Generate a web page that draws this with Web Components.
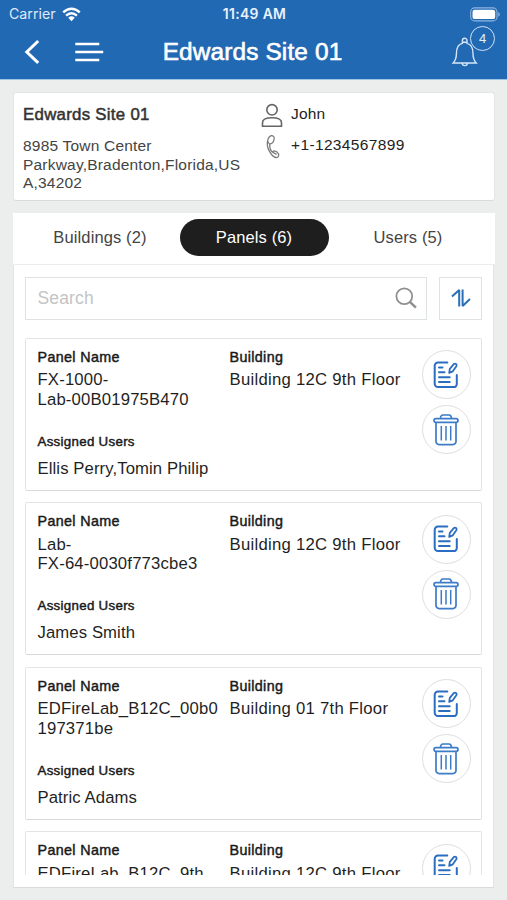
<!DOCTYPE html>
<html lang="en">
<head>
<meta charset="utf-8">
<title>Edwards Site 01</title>
<style>
html,body{margin:0;height:900px;overflow:hidden;background:#ebeeed}
body{font-family:"Liberation Sans",Arial,sans-serif;letter-spacing:.15px;color:#1f1f1f}
</style>
</head>
<body>
<site-app></site-app>
<script>
const define = (name, html, setup) => customElements.define(name, class extends HTMLElement {
  connectedCallback() {
    if (this.shadowRoot) return;
    const t = document.createElement('template');
    t.innerHTML = html;
    this.attachShadow({mode: 'open'}).appendChild(t.content.cloneNode(true));
    if (setup) setup(this, this.shadowRoot);
  }
});

define('status-bar', `
<style>
:host{display:grid;grid-template-columns:1fr auto 1fr;align-items:center;height:28px;padding:0 7px 0 9px;box-sizing:border-box;font:14.2px/28px Inter,sans-serif;letter-spacing:0;color:#dfeafa}
.left{display:flex;align-items:center;gap:6px}
.time{font-weight:600;letter-spacing:.35px;font-size:13.9px;color:#e9f2fc}
.right{display:flex;justify-content:flex-end}
svg{display:block}
</style>
<div class="left"><span>Carrier</span>
<svg width="19" height="15" viewBox="0 0 19 15" fill="none" stroke="#fff" stroke-width="2.5"><path d="M1.2 5.4Q9.5-2 17.8 5.4M4.1 8.6Q9.5 3.9 14.9 8.6"/><path d="M6.3 10.7Q9.5 8 12.7 10.7L9.5 14.3Z" fill="#fff" stroke="none"/></svg></div>
<span class="time">11:49 AM</span>
<div class="right"><svg width="30" height="15" viewBox="0 0 30 15"><rect x=".7" y=".9" width="26.3" height="13" rx="4" fill="none" stroke="#8fb5df" stroke-width="1.1"/><rect x="2.5" y="2.7" width="22.7" height="9.4" rx="2.2" fill="#fff"/><path d="M28.3 5v4.8q1.5-.9 1.5-2.4T28.3 5z" fill="#8fb5df"/></svg></div>`);

define('nav-bar', `
<style>
:host{display:grid;grid-template-columns:123px 1fr 125px;height:51px;color:#fff}
.left{display:flex;gap:36px;padding:11px 0 0 24px}
h1{margin:0;text-align:center;font-size:24.4px;line-height:47px;font-weight:400;letter-spacing:.14px;-webkit-text-stroke:.6px #fff;white-space:nowrap}
.bell{position:relative;justify-self:end;width:55px}
.bell>svg{display:block;margin:9px 0 0}
.badge{position:absolute;left:18px;top:-2px;width:25px;height:25px;box-sizing:border-box;border:1.4px solid #cfe2f6;border-radius:50%;background:#2269b4;font-size:13px;line-height:23px;text-align:center;letter-spacing:0;color:#e4effb}
svg{display:block;overflow:visible}
</style>
<div class="left">
<svg width="17" height="26" viewBox="0 0 17 26" fill="none" stroke="#fff" stroke-width="3"><path d="M14.2 2 2.8 13l11.4 10.9"/></svg>
<svg width="28" height="26" viewBox="0 0 28 26" stroke="#fff" stroke-width="2.5"><path d="M-1.700 5H22.300M-1.700 13H26.200M-1.700 21H22.300"/></svg></div>
<h1><slot></slot></h1>
<div class="bell"><svg width="26" height="31" viewBox="0 0 26 31" fill="none" stroke="#d5e6f8" stroke-width="1.4"><path d="M1.2 26h23c-2.3-2.6-3.2-4.4-3.2-9.3 0-6.3-2.1-9.6-6-10.3V3.5a2.3 2.3 0 0 0-4.6 0v2.9c-3.9.7-6 4-6 10.3 0 4.9-.9 6.7-3.2 9.3zM10 26.5a2.9 2.9 0 0 0 5.6 0M9.7 5.3h6"/></svg><span class="badge">4</span></div>`);

define('site-card', `
<style>
:host{display:grid;grid-template-columns:238px 1fr;height:109px;box-sizing:border-box;background:#fff;border:1px solid #e3e6e5;border-bottom-color:#d9dcdb;border-radius:3px;padding:11px 9px 0;font-size:15.500px}
.name{font-size:16.800px;line-height:22px;letter-spacing:.3px;color:#333;-webkit-text-stroke:.5px #333}
.addr{width:222px;margin-top:11px;line-height:18.500px;color:#444;letter-spacing:.2px}
.contact{display:flex;flex-direction:column;gap:11px;line-height:20px;color:#222}
.contact div{display:flex;height:20px}
svg{overflow:visible;margin-right:8px}
.ph{letter-spacing:.36px}
</style>
<div><div class="name">Edwards Site 01</div><div class="addr">8985 Town Center<br>Parkway,Bradenton,Florida,US<br>A,34202</div></div>
<div class="contact">
<div><svg width="22" height="24" viewBox="0 0 22 24" fill="none" stroke="#666" stroke-width="1.6"><circle cx="11" cy="5.8" r="5.2"/><path d="M1.5 22.2v-3.5c0-3.3 3-5 9.5-5s9.5 1.700 9.5 5v3.500z"/></svg><span>John</span></div>
<div class="ph"><svg width="22" height="24" viewBox="0 0 22 24" fill="none" stroke="#777" stroke-width="1.25" stroke-linejoin="round"><path d="M12.8 1.6C10.6-.3 8.4.8 7.1 4c-1.6 4.2-.6 9 1.5 12.6 2.2 3.8 4.6 6 7 6 1.700 0 2.4-2.500 2-3.600-1-1.800-3.500-3-4.500-3.100-1.200-.1-1.200 1.300-1.900 1.100-2-2-2.600-5.300-2.400-7.500.2-1 1.400-.7 2.400-1.400 1.600-1.200 2.600-5.400 1.600-6.500zM8.800 9.500l-2.100-3M11.200 17l4.400 2.400"/></svg><span>+1-1234567899</span></div>
</div>`);

define('tab-item', `
<style>
:host{display:block;width:149px;height:37px;line-height:37px;border-radius:19px;text-align:center;font-size:16.500px;letter-spacing:.12px;color:#444}
:host([active]){background:#1e1e1e;color:#fff}
</style><slot></slot>`);

define('tab-strip', `
<style>:host{display:flex;justify-content:center;gap:5px;height:52px;box-sizing:border-box;padding-top:6px;background:#fff;border-bottom:1px solid #eceeee}</style><slot></slot>`);

define('search-row', `
<style>
:host{display:flex;gap:12.500px;height:43px}
.box{box-sizing:border-box;border:1.500px solid #dfe2e2;display:flex;align-items:center;background:#fff}
.field{flex:1;justify-content:space-between;padding:0 9px 0 11.500px;font-size:17.500px;color:#c4c4c4}
.sort{width:43px;justify-content:center}
svg{display:block}
</style>
<div class="box field"><span>Search</span><svg width="22" height="22" viewBox="0 0 22 22" fill="none" stroke="#8f8f8f"><circle cx="9.300" cy="9.200" r="7.900" stroke-width="1.800"/><path d="m14.900 14.900 6 5.800" stroke-width="2.500"/></svg></div>
<div class="box sort"><svg width="20" height="20" viewBox="0 0 20 20" fill="none" stroke="#286fb7" stroke-width="2" stroke-linejoin="bevel"><path d="M1 8.500 8.200 2V18.600M11.600 1.400V18L19 11"/></svg></div>`);

define('round-button', `
<style>
:host{display:flex;align-items:center;justify-content:center;width:49px;height:49px;box-sizing:border-box;border:1.500px solid #dedede;border-radius:50%;background:#fff}
svg{display:block;overflow:visible}
</style>`, (el, root) => {
  const icons = {
    edit: `<svg width="26" height="28" viewBox="0 0 26 28" fill="none" stroke="#2b6dc0" stroke-width="2" stroke-linecap="round" stroke-linejoin="round"><path d="M14.300 1.500H5a3.300 3.300 0 0 0-3.300 3.300v18A3.300 3.300 0 0 0 5 26.100h15.800a3 3 0 0 0 3-3v-9"/><path d="M6 6.400h3.500M6 11.200h5.500M6 16.200h10.700M6 21.100h10.700"/><path d="M16.200 11.800l.6-4 4.200-4.900a1.700 1.700 0 0 1 2.500 2.100l-3.700 5.300z" stroke-width="1.800"/></svg>`,
    trash: `<svg width="26" height="32" viewBox="0 0 26 32" fill="none" stroke="#3d7cc8" stroke-width="1.700" stroke-linejoin="round"><path d="M7.500 4.700c0-3 .9-3.700 2.600-3.700h5.800c1.700 0 2.600.7 2.600 3.700"/><rect x="1" y="4.700" width="24" height="3.700" rx="1.800"/><path d="M3 8.800v18.700a3.100 3.100 0 0 0 3.100 3.100h13.800a3.100 3.100 0 0 0 3.100-3.100V8.800"/><path d="M8.300 12v14.500M13 12v14.500M17.700 12v14.500" stroke-width="1.500"/></svg>`
  };
  root.innerHTML += icons[el.getAttribute('icon')];
});

define('panel-card', `
<style>
:host{display:grid;grid-template-columns:192px 192px 49px;height:153px;flex:none;box-sizing:border-box;border:1px solid #e3e5e5;border-bottom-color:#d9dbdb;border-radius:2px;padding:9px 0 0 11.500px;background:#fff}
:host([brief]) .more{display:none}
.label{font-size:14.300px;line-height:18px;letter-spacing:.36px;color:#191919;-webkit-text-stroke:.45px #191919}
.value{font-size:16.700px;line-height:19.500px;margin-top:4.500px;white-space:nowrap}
.name{height:39px;letter-spacing:.17px}
.assigned{margin-top:23.500px;font-size:13.300px;letter-spacing:.3px}
.users{margin-top:8px;letter-spacing:.1px}
.actions{display:flex;flex-direction:column;gap:6px;padding-top:2.500px}
.place{letter-spacing:.27px}
</style>
<div><div class="label">Panel Name</div><div class="value name"><slot name="name"></slot></div><div class="more"><div class="label assigned">Assigned Users</div><div class="value users"><slot name="users"></slot></div></div></div>
<div><div class="label">Building</div><div class="value place"><slot name="place"></slot></div></div>
<div class="actions"><round-button icon="edit"></round-button><round-button icon="trash"></round-button></div>`);

define('site-app', `
<style>
:host{display:flex;flex-direction:column;height:900px}
header{height:79px;background:#2269b4;border-bottom:1px solid #9fc3e4;flex:none}
site-card{margin:12px 12px 12px 13px;flex:none}
main{margin:0 12px 0 13px;height:675px;display:flex;flex-direction:column}
.body{flex:1;min-height:0;margin:0 1px 0 0;background:#fff;box-sizing:border-box;border:1px solid #e2e5e4;border-top:0;border-bottom:1.500px solid #d8dbda;padding:11.500px 11px 12px;display:flex;flex-direction:column;gap:18px}
search-row{flex:none}
.list{display:flex;flex-direction:column;gap:11.500px;overflow:hidden;flex:1;min-height:0}
</style>
<header><status-bar></status-bar><nav-bar>Edwards Site 01</nav-bar></header>
<site-card></site-card>
<main>
<tab-strip><tab-item>Buildings (2)</tab-item><tab-item active>Panels (6)</tab-item><tab-item>Users (5)</tab-item></tab-strip>
<div class="body"><search-row></search-row>
<div class="list">
<panel-card><span slot="name">FX-1000-<br>Lab-00B01975B470</span><span slot="place">Building 12C 9th Floor</span><span slot="users">Ellis Perry,Tomin Philip</span></panel-card>
<panel-card><span slot="name">Lab-<br>FX-64-0030f773cbe3</span><span slot="place">Building 12C 9th Floor</span><span slot="users">James Smith</span></panel-card>
<panel-card><span slot="name">EDFireLab_B12C_00b0<br>197371be</span><span slot="place">Building 01 7th Floor</span><span slot="users">Patric Adams</span></panel-card>
<panel-card brief><span slot="name">EDFireLab_B12C_9th</span><span slot="place">Building 12C 9th Floor</span></panel-card>
</div></div>
</main>`);
</script>
</body>
</html>
